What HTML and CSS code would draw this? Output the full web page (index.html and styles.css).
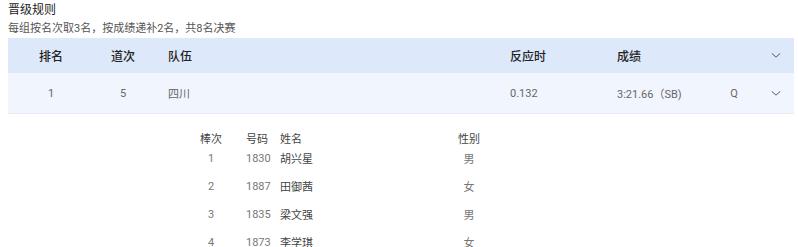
FILE: index.html
```html
<!DOCTYPE html>
<html lang="zh">
<head>
<meta charset="utf-8">
<link rel="stylesheet" href="styles.css">
</head>
<body>
<div class="page">
  <div class="rules">
    <div class="rules-title">晋级规则</div>
    <div class="rules-text">每组按名次取3名，按成绩递补2名，共8名决赛</div>
  </div>
  <div class="table">
    <div class="row head">
      <div class="c rank">排名</div>
      <div class="c lane">道次</div>
      <div class="c team">队伍</div>
      <div class="c react">反应时</div>
      <div class="c result">成绩</div>
      <div class="c q"></div>
      <div class="c toggle"><svg class="chev" viewBox="0 0 12 8"><path d="M1 1.5 L6 6 L11 1.5"/></svg></div>
    </div>
    <div class="row body">
      <div class="c rank">1</div>
      <div class="c lane">5</div>
      <div class="c team">四川</div>
      <div class="c react">0.132</div>
      <div class="c result">3:21.66（SB)</div>
      <div class="c q">Q</div>
      <div class="c toggle"><svg class="chev" viewBox="0 0 12 8"><path d="M1 1.5 L6 6 L11 1.5"/></svg></div>
    </div>
    <div class="members">
      <div class="m-row m-head">
        <div class="m order">棒次</div>
        <div class="m bib">号码</div>
        <div class="m name">姓名</div>
        <div class="m sex">性别</div>
      </div>
      <div class="m-row">
        <div class="m order">1</div>
        <div class="m bib">1830</div>
        <div class="m name">胡兴星</div>
        <div class="m sex">男</div>
      </div>
      <div class="m-row">
        <div class="m order">2</div>
        <div class="m bib">1887</div>
        <div class="m name">田御茜</div>
        <div class="m sex">女</div>
      </div>
      <div class="m-row">
        <div class="m order">3</div>
        <div class="m bib">1835</div>
        <div class="m name">梁文强</div>
        <div class="m sex">男</div>
      </div>
      <div class="m-row">
        <div class="m order">4</div>
        <div class="m bib">1873</div>
        <div class="m name">李学琪</div>
        <div class="m sex">女</div>
      </div>
    </div>
  </div>
</div>
</body>
</html>
```
FILE: styles.css
```css
html, body {
  margin: 0;
  padding: 0;
  background: #ffffff;
}
body {
  font-family: Roboto, "Noto Sans CJK SC", sans-serif;
  color: #333;
  overflow: hidden;
}
.page {
  padding: 0 4px 0 8px;
}
.rules {
  padding-top: 2px;
}
.rules-title {
  font-size: 12px;
  line-height: 16px;
  color: #222;
}
.rules-text {
  font-size: 11px;
  line-height: 16px;
  margin-top: 3px;
  color: #555;
}
.table {
  margin-top: 1px;
}
.row {
  display: grid;
  grid-template-columns: 86px 58px 342px 107px 110px 46px 37px;
  align-items: center;
}
.row.head {
  height: 35px;
  background: #dde9fb;
  font-size: 12px;
  font-weight: 500;
  color: #222;
}
.row.body {
  height: 40px;
  background: #f1f6fe;
  border-bottom: 1px solid #e6ebf3;
  font-size: 11px;
  color: #666;
}
.c {
  white-space: nowrap;
}
.rank, .lane, .q {
  text-align: center;
}
.team, .react, .result {
  padding-left: 16px;
}
.toggle {
  display: flex;
  justify-content: center;
}
.chev {
  width: 10px;
  height: 7px;
  fill: none;
  stroke: #556;
  stroke-width: 1.2;
}
.members {
  padding: 16px 0 0 180px;
}
.m-row {
  display: grid;
  grid-template-columns: 46px 46px 178px 22px;
  height: 28px;
  align-items: center;
  font-size: 11px;
  color: #777;
}
.m-row.m-head {
  height: 12px;
  margin-bottom: 2px;
  color: #444;
}
.order, .sex {
  text-align: center;
}
.bib {
  padding-left: 12px;
}
.name {
  color: #444;
}
```
